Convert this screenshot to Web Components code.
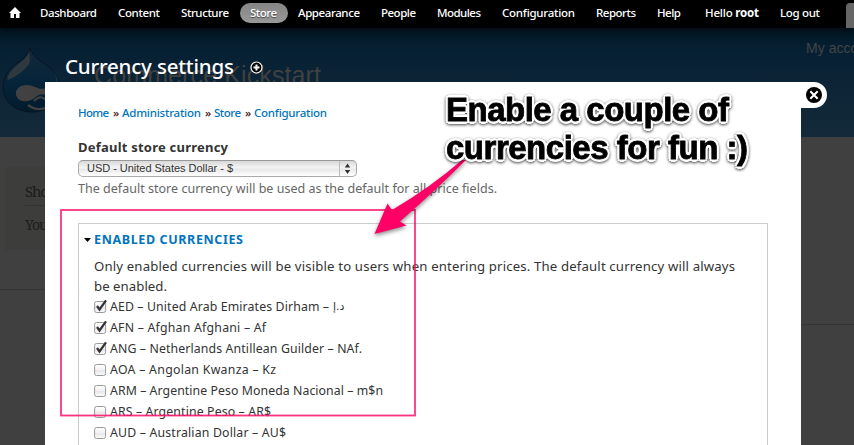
<!DOCTYPE html>
<html lang="en">
<head>
<meta charset="utf-8">
<title>Currency settings</title>
<style>
html,body{margin:0;height:100%;overflow:hidden;background:#404040}
body{font-family:"Noto Sans","Open Sans",sans-serif;color:#333}
</style>
</head>
<body>
<currency-page></currency-page>
<script>
const define = (name, html, setup) => customElements.define(name, class extends HTMLElement {
  connectedCallback() {
    if (this.shadowRoot) return;
    const t = document.createElement('template');
    t.innerHTML = html;
    this.attachShadow({mode: 'open'}).append(t.content.cloneNode(true));
    if (setup) setup.call(this, this.shadowRoot);
  }
});

// A single line of text tracked out to the width given in its w attribute.
define('fit-text', `<style>:host{display:inline-block;white-space:nowrap;flex:none}span{display:inline-block}</style><span><slot></slot></span>`, function (root) {
  const w = +this.getAttribute('w'), s = root.querySelector('span');
  if (!w) return;
  const n = root.querySelector('slot').assignedNodes({flatten: true}).map(x => x.textContent).join('').length;
  s.style.letterSpacing = ((w - s.getBoundingClientRect().width) / Math.max(1, n - 1)) + 'px';
  this.style.width = w + 'px';
});

define('admin-toolbar', `<style>
:host{display:flex;position:relative;z-index:3;height:28px;box-sizing:border-box;background:#000;color:#fff;font-size:11.5px;font-weight:500;line-height:26px;box-shadow:0 1px 10px 1px #000a;overflow:visible}
svg{flex:none;width:12px;height:12px;margin:7px 19px 0 9px}
nav{display:flex;gap:21px}
.active{position:relative;z-index:0;text-shadow:0 1px 1px #444}
.active::before{content:"";position:absolute;z-index:-1;left:-10px;right:-11px;top:3px;height:20px;border-radius:10px;background:linear-gradient(#858585,#999)}
.user{margin-left:3px}
i{position:absolute;right:0;top:3px;width:8px;height:25px;background:#666;border-radius:4px 0 0 0}
</style>
<svg viewBox="0 0 12 12"><path fill="#fff" d="M6 0 12 6H10.5V11H7V7H5V11H1.5V6H0L6 0Z"/></svg>
<nav><fit-text w="57">Dashboard</fit-text><fit-text w="42">Content</fit-text><fit-text w="48">Structure</fit-text><fit-text class="active" w="27">Store</fit-text><fit-text w="62">Appearance</fit-text><fit-text w="35">People</fit-text><fit-text w="44">Modules</fit-text><fit-text w="73">Configuration</fit-text><fit-text w="40">Reports</fit-text><fit-text w="24">Help</fit-text><fit-text class="user" w="54">Hello <b>root</b></fit-text><fit-text w="40">Log out</fit-text></nav><i></i>`);

define('site-backdrop', `<style>
:host{position:absolute;inset:0;z-index:0;background:#404040;overflow:hidden;display:block}
.head{position:relative;height:137px;background:linear-gradient(#021824 28px,#062033 50px,#142a3a)}
.drop{position:absolute;left:2px;top:47px}
.name{position:absolute;left:94px;top:60px;font:25px/30px "Liberation Sans",sans-serif;color:#404040}
.acct{position:absolute;left:806px;top:40px;font:14px/16px "Liberation Sans",sans-serif;color:#424446}
.side{position:absolute;left:5px;top:167px;width:200px;height:83px;background:#3d3d3b;box-sizing:border-box;padding:12px 0 0 20px;color:#1c1c1c;font:15px/24px "Noto Serif","DejaVu Serif","Liberation Serif",serif}
.side div{height:26px;border-bottom:1px solid #333;margin-bottom:7px}
.side p{margin:0;font-size:14px}
hr{position:absolute;margin:0;border:0;height:1px;background:#353535;left:801px;right:0;top:324px}
hr.l{left:0;right:auto;width:45px;top:289px}
</style>
<div class="head">
<svg class="drop" width="60" height="67" viewBox="0 0 60 67"><defs><linearGradient id="g" x2="0" y2="1"><stop stop-color="#14293a"/><stop offset=".5" stop-color="#06243a"/><stop offset="1" stop-color="#021b2d"/></linearGradient></defs>
<path d="M28 1C31 11 39 14 46 19 54 26 58 33 58 42 56 57 45 65 30 65 14 65 3 56 1 42 1 28 8 20 18 14 24 10 27 6 28 1Z" fill="url(#g)" stroke="#07151e"/>
<path d="M27 4C26 10 20 14 14 19 8 24 4 31 6 33 13 30 26 22 28 14Z" fill="#3b4042" opacity=".75"/>
<path d="M52 24C59 35 58 48 49 57 56 45 56 36 52 24Z" fill="#294354" opacity=".5"/>
<path d="M25 38C17 38 13 43 14 48 16 55 25 56 31 52 36 48 39 46 45 49V40C38 45 33 38 25 38Z" fill="#414141"/>
<path d="M32 54Q38 47 44 53M26 58Q36 65 45 60" fill="none" stroke="#414141" stroke-width="2.2"/></svg>
<fit-text class="name" w="227">Commerce Kickstart</fit-text><fit-text class="acct" w="72">My account</fit-text>
</div>
<div class="side"><div><fit-text w="24">Sho</fit-text></div><p><fit-text w="23">You</fit-text></p></div><hr><hr class="l">`);

define('close-tab', `<style>:host{position:absolute;left:100%;top:0;width:26px;height:26px;background:#fff;border-radius:0 13px 13px 0}svg{display:block}</style>
<svg width="26" height="26"><circle cx="13" cy="13" r="8" fill="#000"/><path d="M9.3 9.3l7.4 7.4M16.7 9.3l-7.4 7.4" stroke="#fff" stroke-width="2.1"/></svg>`);

define('overlay-title', `<style>:host{display:flex;align-items:center;gap:16px;height:54px;box-sizing:border-box;padding:0 0 0 20px}
fit-text{font-size:20.5px;line-height:30px;font-weight:500;color:#fff;margin-top:22px}svg{margin-top:24px}</style>
<fit-text w="169"><slot></slot></fit-text><svg width="13" height="13"><circle cx="6.5" cy="6.5" r="5.5" fill="#000" stroke="#fff" stroke-width="1.2"/><path d="M6.5 3.5v6M3.5 6.5h6" stroke="#fff" stroke-width="2"/></svg>`);

define('crumb-trail', `<style>:host{display:flex;gap:4px;font-size:11.5px;line-height:16px;font-weight:500;color:#411}a{color:#0074bd;display:flex}</style>
<a><fit-text w="31">Home</fit-text></a><fit-text w="5">»</fit-text><a><fit-text w="79">Administration</fit-text></a><fit-text w="5">»</fit-text><a><fit-text w="27">Store</fit-text></a><fit-text w="5">»</fit-text><a><fit-text w="73">Configuration</fit-text></a>`);

define('select-box', `<style>:host{display:flex;position:relative;box-sizing:border-box;width:279px;height:17px;border:1px solid #aaa;border-top-color:#999;border-radius:5px;background:linear-gradient(#d8d8d8,#f4f4f4 45%,#e9e9e9 55%,#fff);padding-left:8px;font:11px/15px "Liberation Sans",sans-serif;color:#333}
svg{margin-left:auto;border-left:1px solid #bbb}</style>
<fit-text w="146"><slot></slot></fit-text><svg width="16" height="15"><path d="M4.8 6.5 7.5 2.5 10.2 6.5ZM4.8 9 7.5 13 10.2 9Z" fill="#333"/></svg>`);

define('check-row', `<style>:host{display:flex;height:21px;align-items:center;font-size:12.3px;line-height:21px;color:#333}
svg{flex:none;margin-right:3px;overflow:visible}.tick{display:none}:host([checked]) .tick{display:block}</style>
<svg width="13" height="14"><defs><linearGradient id="b" x2="0" y2="1"><stop stop-color="#fff"/><stop offset=".45" stop-color="#f3f3f3"/><stop offset=".55" stop-color="#e8e8e8"/><stop offset="1" stop-color="#fcfcfc"/></linearGradient></defs><rect x=".6" y="1.5" width="11" height="11" rx="2" fill="url(#b)" stroke="#999"/><path class="tick" d="M3 6 5.5 9.5 12 .3" fill="none" stroke="#333" stroke-width="2.2"/></svg><slot></slot>`);

define('field-group', `<style>:host{display:block;box-sizing:border-box;width:690px;height:240px;border:1px solid #ccc;padding:6px 0 0 15px}
h2{display:flex;align-items:center;margin:0 0 6px -10px;height:20px;font-size:12.5px;line-height:20px;color:#0074bd}h2 svg{margin-right:3px}
</style><h2><svg width="7" height="4"><path d="M0 0H7L3.5 4Z" fill="#000"/></svg><fit-text w="149">ENABLED CURRENCIES</fit-text></h2><slot></slot>`);

define('settings-panel', `<style>
:host{display:block;position:relative;width:756px;height:363px;box-sizing:border-box;background:#fff;padding:23px 33px 0}
.lab{display:flex;font-size:13px;line-height:18px;font-weight:bold;margin:17px 0 4px;color:#333}
.desc{display:flex;font-size:12.5px;line-height:18px;color:#666;margin:3px 0 25px}
.p{display:flex;font-size:13.2px;line-height:20px;color:#333}
.ar{font-family:"DejaVu Sans",sans-serif;font-size:11px;margin-left:4px}
</style>
<crumb-trail></crumb-trail>
<div class="lab"><fit-text w="150">Default store currency</fit-text></div>
<select-box>USD - United States Dollar - $</select-box>
<div class="desc"><fit-text w="419">The default store currency will be used as the default for all price fields.</fit-text></div>
<field-group>
<div class="p"><fit-text w="641">Only enabled currencies will be visible to users when entering prices. The default currency will always</fit-text></div>
<div class="p"><fit-text w="73">be enabled.</fit-text></div>
<check-row checked><fit-text w="219">AED – United Arab Emirates Dirham –</fit-text><span class="ar" dir="rtl">د.إ</span></check-row>
<check-row checked><fit-text w="156">AFN – Afghan Afghani – Af</fit-text></check-row>
<check-row checked><fit-text w="252">ANG – Netherlands Antillean Guilder – NAf.</fit-text></check-row>
<check-row><fit-text w="166">AOA – Angolan Kwanza – Kz</fit-text></check-row>
<check-row><fit-text w="273">ARM – Argentine Peso Moneda Nacional – m$n</fit-text></check-row>
<check-row><fit-text w="161">ARS – Argentine Peso – AR$</fit-text></check-row>
<check-row><fit-text w="176">AUD – Australian Dollar – AU$</fit-text></check-row>
</field-group><close-tab></close-tab>`);

define('callout-note', `<style>
:host{position:absolute;inset:0;z-index:4;pointer-events:none}
.shape{position:absolute;inset:0}
.text{position:absolute;left:446px;top:91px;font:bold 33px/38px "Liberation Sans",sans-serif;color:#000;-webkit-text-stroke:.8px #000;
text-shadow:2.6px 0 #fff,-2.6px 0 #fff,0 2.6px #fff,0 -2.6px #fff,1.9px 1.9px #fff,-1.9px 1.9px #fff,1.9px -1.9px #fff,-1.9px -1.9px #fff,1px 2.4px #fff,-1px 2.4px #fff,1px -2.4px #fff,-1px -2.4px #fff;filter:drop-shadow(0 1px 1.5px #000b)}
.text fit-text{display:block}
</style>
<svg class="shape" width="854" height="445"><rect x="61" y="210" width="354" height="205.5" fill="none" stroke="#ff0f69" stroke-opacity=".85" stroke-width="1.8"/>
<path d="M374.5 234 387.5 203.5 392 210Q431 187 462 160L466 160Q437 189 400 221.5L406.5 225.5Z" fill="#ff0066" style="filter:drop-shadow(0 2px 2px #0007)"/></svg>
<div class="text"><fit-text w="283">Enable a couple of</fit-text><fit-text w="302">currencies for fun :)</fit-text></div>`);

define('currency-page', `<style>:host{display:block;position:relative;width:854px;height:445px;overflow:hidden}
main{position:relative;z-index:2;margin-left:45px;width:756px}overlay-title{position:relative;z-index:4}
admin-toolbar{z-index:1}</style>
<site-backdrop></site-backdrop><admin-toolbar></admin-toolbar><main><overlay-title>Currency settings</overlay-title><settings-panel></settings-panel></main><callout-note></callout-note>`);
</script>
</body>
</html>
